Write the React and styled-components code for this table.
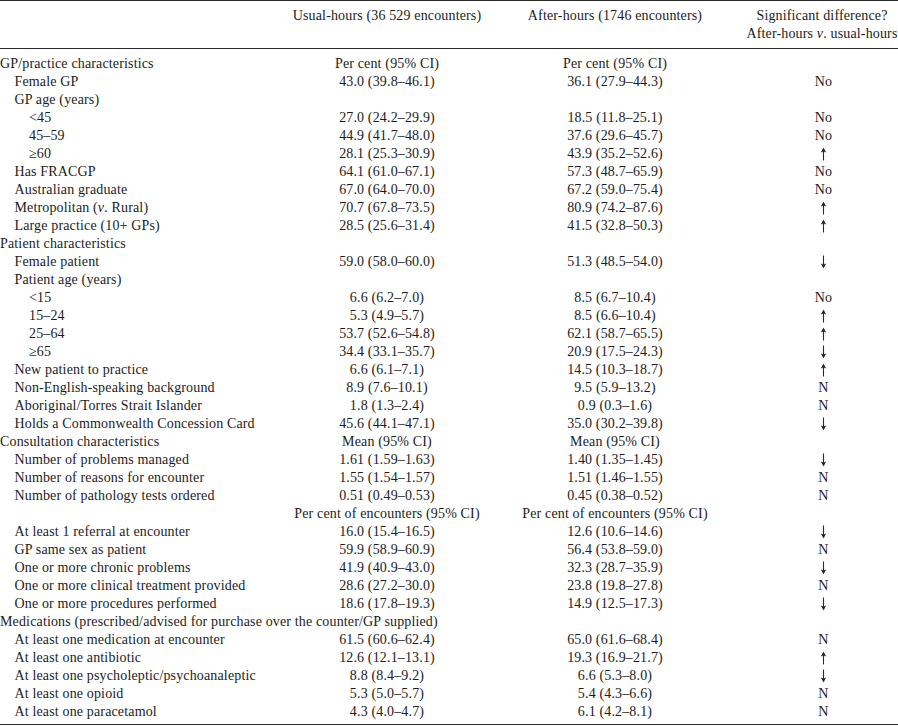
import styled, { createGlobalStyle } from "styled-components";

const GlobalStyle = createGlobalStyle`
  html, body {
    margin: 0;
    padding: 0;
    background: #ffffff;
  }
  body {
    font-family: "Liberation Serif", "Times New Roman", serif;
    color: #1c1c1c;
  }
`;

const Table = styled.div`
  width: 898px;
  border-top: 1.5px solid #2b2b2b;
  border-bottom: 1.5px solid #2b2b2b;
  font-size: 14px;
  letter-spacing: 0.15px;
  line-height: 18px;
`;

const Row = styled.div`
  display: grid;
  grid-template-columns: 290px 194px 262px 152px;
  height: 18px;
  white-space: nowrap;
`;

const Head = styled.div`
  display: grid;
  grid-template-columns: 290px 194px 262px 152px;
  padding: 6px 0 5px;
  border-bottom: 1.5px solid #2b2b2b;
`;

const Body = styled.div`
  padding: 6px 0 3px;
`;

const Label = styled.div`
  padding-left: ${(p) => p.$indent * 14.5}px;
  text-align: left;
`;

const Cell = styled.div`
  text-align: center;
  overflow: visible;
`;

const SigCell = styled.div`
  display: flex;
  align-items: center;
  justify-content: center;
  padding-left: 3px;
`;

const HeadCell = styled.div`
  text-align: center;
  white-space: nowrap;
`;

const ArrowSvg = styled.svg`
  display: block;
  width: 7px;
  height: 14px;
  color: #2a2a2a;
  transform: ${(p) => (p.$down ? "rotate(180deg)" : "none")};
`;

function Arrow({ down }) {
  return (
    <ArrowSvg viewBox="0 0 7 14" $down={down}>
      <path d="M3.5 0.5 L6.2 5.6 L3.5 4.6 L0.8 5.6 Z" fill="currentColor" />
      <line x1="3.5" y1="4" x2="3.5" y2="13.5" stroke="currentColor" strokeWidth="1.1" />
    </ArrowSvg>
  );
}

function Sig({ value }) {
  if (value === "up") return <Arrow />;
  if (value === "down") return <Arrow down />;
  return value || null;
}

const rows = [
  { label: "GP/practice characteristics", indent: 0, a: "Per cent (95% CI)", b: "Per cent (95% CI)" },
  { label: "Female GP", indent: 1, a: "43.0 (39.8–46.1)", b: "36.1 (27.9–44.3)", sig: "No" },
  { label: "GP age (years)", indent: 1 },
  { label: "<45", indent: 2, a: "27.0 (24.2–29.9)", b: "18.5 (11.8–25.1)", sig: "No" },
  { label: "45–59", indent: 2, a: "44.9 (41.7–48.0)", b: "37.6 (29.6–45.7)", sig: "No" },
  { label: "≥60", indent: 2, a: "28.1 (25.3–30.9)", b: "43.9 (35.2–52.6)", sig: "up" },
  { label: "Has FRACGP", indent: 1, a: "64.1 (61.0–67.1)", b: "57.3 (48.7–65.9)", sig: "No" },
  { label: "Australian graduate", indent: 1, a: "67.0 (64.0–70.0)", b: "67.2 (59.0–75.4)", sig: "No" },
  { label: <>Metropolitan (<i>v</i>. Rural)</>, indent: 1, a: "70.7 (67.8–73.5)", b: "80.9 (74.2–87.6)", sig: "up" },
  { label: "Large practice (10+ GPs)", indent: 1, a: "28.5 (25.6–31.4)", b: "41.5 (32.8–50.3)", sig: "up" },
  { label: "Patient characteristics", indent: 0 },
  { label: "Female patient", indent: 1, a: "59.0 (58.0–60.0)", b: "51.3 (48.5–54.0)", sig: "down" },
  { label: "Patient age (years)", indent: 1 },
  { label: "<15", indent: 2, a: "6.6 (6.2–7.0)", b: "8.5 (6.7–10.4)", sig: "No" },
  { label: "15–24", indent: 2, a: "5.3 (4.9–5.7)", b: "8.5 (6.6–10.4)", sig: "up" },
  { label: "25–64", indent: 2, a: "53.7 (52.6–54.8)", b: "62.1 (58.7–65.5)", sig: "up" },
  { label: "≥65", indent: 2, a: "34.4 (33.1–35.7)", b: "20.9 (17.5–24.3)", sig: "down" },
  { label: "New patient to practice", indent: 1, a: "6.6 (6.1–7.1)", b: "14.5 (10.3–18.7)", sig: "up" },
  { label: "Non-English-speaking background", indent: 1, a: "8.9 (7.6–10.1)", b: "9.5 (5.9–13.2)", sig: "N" },
  { label: "Aboriginal/Torres Strait Islander", indent: 1, a: "1.8 (1.3–2.4)", b: "0.9 (0.3–1.6)", sig: "N" },
  { label: "Holds a Commonwealth Concession Card", indent: 1, a: "45.6 (44.1–47.1)", b: "35.0 (30.2–39.8)", sig: "down" },
  { label: "Consultation characteristics", indent: 0, a: "Mean (95% CI)", b: "Mean (95% CI)" },
  { label: "Number of problems managed", indent: 1, a: "1.61 (1.59–1.63)", b: "1.40 (1.35–1.45)", sig: "down" },
  { label: "Number of reasons for encounter", indent: 1, a: "1.55 (1.54–1.57)", b: "1.51 (1.46–1.55)", sig: "N" },
  { label: "Number of pathology tests ordered", indent: 1, a: "0.51 (0.49–0.53)", b: "0.45 (0.38–0.52)", sig: "N" },
  { label: "", indent: 0, a: "Per cent of encounters (95% CI)", b: "Per cent of encounters (95% CI)" },
  { label: "At least 1 referral at encounter", indent: 1, a: "16.0 (15.4–16.5)", b: "12.6 (10.6–14.6)", sig: "down" },
  { label: "GP same sex as patient", indent: 1, a: "59.9 (58.9–60.9)", b: "56.4 (53.8–59.0)", sig: "N" },
  { label: "One or more chronic problems", indent: 1, a: "41.9 (40.9–43.0)", b: "32.3 (28.7–35.9)", sig: "down" },
  { label: "One or more clinical treatment provided", indent: 1, a: "28.6 (27.2–30.0)", b: "23.8 (19.8–27.8)", sig: "N" },
  { label: "One or more procedures performed", indent: 1, a: "18.6 (17.8–19.3)", b: "14.9 (12.5–17.3)", sig: "down" },
  { label: "Medications (prescribed/advised for purchase over the counter/GP supplied)", indent: 0 },
  { label: "At least one medication at encounter", indent: 1, a: "61.5 (60.6–62.4)", b: "65.0 (61.6–68.4)", sig: "N" },
  { label: "At least one antibiotic", indent: 1, a: "12.6 (12.1–13.1)", b: "19.3 (16.9–21.7)", sig: "up" },
  { label: "At least one psycholeptic/psychoanaleptic", indent: 1, a: "8.8 (8.4–9.2)", b: "6.6 (5.3–8.0)", sig: "down" },
  { label: "At least one opioid", indent: 1, a: "5.3 (5.0–5.7)", b: "5.4 (4.3–6.6)", sig: "N" },
  { label: "At least one paracetamol", indent: 1, a: "4.3 (4.0–4.7)", b: "6.1 (4.2–8.1)", sig: "N" },
];

export default function App() {
  return (
    <>
      <GlobalStyle />
      <Table role="table">
        <Head role="row">
          <HeadCell />
          <HeadCell>Usual-hours (36 529 encounters)</HeadCell>
          <HeadCell>After-hours (1746 encounters)</HeadCell>
          <HeadCell>
            Significant difference?
            <br />
            After-hours <i>v</i>. usual-hours
          </HeadCell>
        </Head>
        <Body>
          {rows.map((r, i) => (
            <Row role="row" key={i}>
              <Label $indent={r.indent}>{r.label}</Label>
              <Cell>{r.a}</Cell>
              <Cell>{r.b}</Cell>
              <SigCell>
                <Sig value={r.sig} />
              </SigCell>
            </Row>
          ))}
        </Body>
      </Table>
    </>
  );
}
